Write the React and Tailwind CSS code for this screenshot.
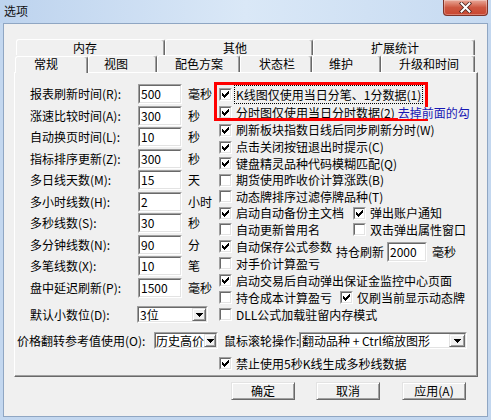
import React from "react";

const sunkenOuter =
  "border border-t-[#a0a0a0] border-l-[#a0a0a0] border-r-white border-b-white";
const sunkenInner =
  "border border-t-[#696969] border-l-[#696969] border-r-[#e3e3e3] border-b-[#e3e3e3] bg-white";
const raised =
  "border border-t-[#e3e3e3] border-l-[#e3e3e3] border-r-[#696969] border-b-[#696969] shadow-[inset_1px_1px_0_#fff,inset_-1px_-1px_0_#a0a0a0] bg-[#f0f0f0]";

const Check = ({ on }) => (
  <span className={"block w-[13px] h-[13px] shrink-0 " + sunkenOuter}>
    <span className={"block w-full h-full " + sunkenInner}>
      {on && (
        <svg width="9" height="9" viewBox="0 0 9 9" className="block" shapeRendering="crispEdges">
          <path
            fill="#000"
            d="M7 1h1v1h-1z M6 2h2v1h-2z M1 3h1v1h-1z M5 3h3v1h-3z M1 4h2v1h-2z M4 4h3v1h-3z M1 5h5v1h-5z M2 6h3v1h-3z M3 7h1v1h-1z"
          />
        </svg>
      )}
    </span>
  </span>
);

const Tri = () => (
  <svg width="7" height="4" viewBox="0 0 7 4" shapeRendering="crispEdges" className="block">
    <path fill="#000" d="M0 0h7v1h-7z M1 1h5v1h-5z M2 2h3v1h-3z M3 3h1v1h-1z" />
  </svg>
);

const Field = ({ w, value }) => (
  <div className={"h-[20px] shrink-0 " + w + " " + sunkenOuter}>
    <div className={"h-full flex items-center pl-[1px] leading-[14px] " + sunkenInner}>{value}</div>
  </div>
);

const Combo = ({ w, text, bw = "w-[14px]", pl = "pl-[1px]" }) => (
  <div className={"h-[17px] shrink-0 " + w + " " + sunkenOuter}>
    <div className={"h-full flex items-center " + sunkenInner}>
      <span className={"flex-1 min-w-0 whitespace-nowrap leading-[13px] " + pl}>{text}</span>
      <span className={"h-full flex items-center justify-center shrink-0 relative z-10 " + bw + " " + raised}>
        <Tri />
      </span>
    </div>
  </div>
);

const CB = ({ on, h, children }) => (
  <div className={"flex items-center " + h}>
    <Check on={on} />
    <span className="ml-[4px] whitespace-nowrap">{children}</span>
  </div>
);

const leftRows = [
  ["报表刷新时间(R):", "500", "毫秒", "h-[22px]"],
  ["涨速比较时间(A):", "300", "秒", "h-[21px]"],
  ["自动换页时间(L):", "10", "秒", "h-[22px]"],
  ["指标排序更新(Z):", "300", "秒", "h-[21px]"],
  ["多日线天数(M):", "15", "天", "h-[22px]"],
  ["多小时线数(H):", "2", "小时", "h-[21px]"],
  ["多秒线数(S):", "30", "秒", "h-[22px]"],
  ["多分钟线数(N):", "90", "分", "h-[21px]"],
  ["多笔线数(X):", "10", "笔", "h-[22px]"],
  ["盘中延迟刷新(P):", "1500", "毫秒", "h-[21px]"],
];

const tabBase =
  "h-full flex items-center bg-[#f0f0f0] border-t border-l border-white border-r border-r-[#696969] rounded-t-[3px] shadow-[inset_-1px_0_0_#a0a0a0] whitespace-nowrap";

export default function App() {
  return (
    <div className="relative w-[491px] h-[420px] overflow-hidden bg-[#c3d7ef] flex flex-col font-['Noto_Sans_CJK_SC','Liberation_Sans',sans-serif] text-[12px] leading-[14px] text-black">
      {/* Title bar */}
      <div className="h-[23px] shrink-0 flex items-start bg-gradient-to-r from-[#bdd3ee] via-[#dae8f7] to-[#c6daf1]">
        <span className="ml-[4px] mt-[4px] text-[12px] leading-[14px] text-[#111]">选项</span>
        <div className="ml-auto mr-[3px] w-[45px] h-[16px] rounded-b-[4px] border border-t-0 border-[#7e3329] bg-gradient-to-b from-[#e8a899] via-[#cd5741] to-[#c9452f] shadow-[inset_0_0_0_1px_rgba(255,255,255,0.3)] flex items-center justify-center">
          <svg width="13" height="11" viewBox="0 0 13 11">
            <path d="M2.5 1.5 L10.5 9.5 M10.5 1.5 L2.5 9.5" stroke="#4a2520" strokeWidth="3.6" strokeLinecap="square" />
            <path d="M2.5 1.5 L10.5 9.5 M10.5 1.5 L2.5 9.5" stroke="#fff" strokeWidth="2" strokeLinecap="square" />
          </svg>
        </div>
      </div>

      {/* Client area */}
      <div className="mx-[3px] h-[394px] shrink-0 border border-[#8fa6c3] bg-[#f0f0f0] flex flex-col">
        <div className="ml-[10px] mt-[15px] w-[464px] flex flex-col">
          {/* Tab row 1 */}
          <div className="h-[16px] pl-[2px] flex">
            <div className={"w-[149px] pl-[56px] " + tabBase}>内存</div>
            <div className={"w-[148px] pl-[57px] " + tabBase}>其他</div>
            <div className={"w-[162px] pl-[57px] " + tabBase}>扩展统计</div>
          </div>
          {/* Tab row 2 */}
          <div className="h-[17px] pl-[1px] flex items-end">
            <div className={"relative z-10 -mb-px h-[20px] w-[73px] pl-[18px] pb-[2px] " + tabBase}>常规</div>
            <div className={"w-[69px] pl-[15px] " + tabBase}>视图</div>
            <div className={"w-[83px] pl-[17px] " + tabBase}>配色方案</div>
            <div className={"w-[72px] pl-[18px] " + tabBase}>状态栏</div>
            <div className={"w-[69px] pl-[16px] " + tabBase}>维护</div>
            <div className={"w-[94px] pl-[17px] " + tabBase}>升级和时间</div>
          </div>

          {/* Panel */}
          <div className="h-[305px] border border-t-white border-l-white border-r-[#696969] border-b-[#696969] shadow-[inset_-1px_-1px_0_#a0a0a0] flex flex-col">
            <div className="pt-[11px] flex">
              {/* Left column */}
              <div className="w-[204px] pl-[15px] flex flex-col shrink-0">
                {leftRows.map(([label, val, unit, h]) => (
                  <div key={label} className={"flex items-start " + h}>
                    <span className="w-[108px] h-[20px] flex items-center whitespace-nowrap">{label}</span>
                    <Field w="w-[44px]" value={val} />
                    <span className="ml-[6px] h-[20px] flex items-center whitespace-nowrap">{unit}</span>
                  </div>
                ))}
                <div className="mt-[7px] h-[17px] flex items-center">
                  <span className="w-[107px] whitespace-nowrap">默认小数位(D):</span>
                  <Combo w="w-[71px]" text="3位" />
                </div>
              </div>

              {/* Right column */}
              <div className="pt-[1px] flex flex-col">
                <CB on h="h-[19px]">
                  <span className="-ml-[2px] px-[1px] border border-dotted border-black">K线图仅使用当日分笔、1分数据(1)</span>
                </CB>
                <div className="h-[17px] flex items-center">
                  <Check on />
                  <span className="ml-[4px] whitespace-nowrap">分时图仅使用当日分时数据(2)</span>
                  <span className="relative z-30 ml-[3px] whitespace-nowrap leading-[12px] bg-[#f0f0f0] text-[#1717b4]">去掉前面的勾</span>
                </div>
                <CB on h="h-[18px]">刷新板块指数日线后同步刷新分时(W)</CB>
                <CB on h="h-[16px]">点击关闭按钮退出时提示(C)</CB>
                <CB on h="h-[17px]">键盘精灵品种代码模糊匹配(Q)</CB>
                <CB h="h-[16px]">期货使用昨收价计算涨跌(B)</CB>
                <CB h="h-[17px]">动态牌排序过滤停牌品种(T)</CB>
                <div className="h-[16px] flex items-center">
                  <Check on />
                  <span className="ml-[4px] w-[117px] whitespace-nowrap">启动自动备份主文档</span>
                  <Check on />
                  <span className="ml-[4px] whitespace-nowrap">弹出账户通知</span>
                </div>
                <div className="h-[17px] flex items-center">
                  <Check />
                  <span className="ml-[4px] w-[117px] whitespace-nowrap">自动更新曾用名</span>
                  <Check />
                  <span className="ml-[4px] whitespace-nowrap">双击弹出属性窗口</span>
                </div>
                <div className="flex">
                  <div className="w-[117px] flex flex-col shrink-0">
                    <CB on h="h-[17px]">自动保存公式参数</CB>
                    <CB h="h-[17px]">对手价计算盈亏</CB>
                  </div>
                  <div className="pt-[4px] flex items-start">
                    <span className="h-[20px] flex items-center whitespace-nowrap">持仓刷新</span>
                    <div className="ml-[3px]">
                      <Field w="w-[40px]" value="2000" />
                    </div>
                    <span className="ml-[5px] h-[20px] flex items-center whitespace-nowrap">毫秒</span>
                  </div>
                </div>
                <CB on h="h-[17px]">启动交易后自动弹出保证金监控中心页面</CB>
                <div className="h-[17px] flex items-center">
                  <Check />
                  <span className="ml-[4px] w-[104px] whitespace-nowrap">持仓成本计算盈亏</span>
                  <Check on />
                  <span className="ml-[4px] whitespace-nowrap">仅刷当前显示动态牌</span>
                </div>
                <CB h="h-[17px]">DLL公式加载驻留内存模式</CB>
              </div>
            </div>

            {/* Price row */}
            <div className="mt-[9px] h-[17px] pl-[2px] flex items-center">
              <span className="w-[137px] whitespace-nowrap">价格翻转参考值使用(O):</span>
              <Combo w="w-[64px]" text="历史高价" bw="w-[12px]" pl="pl-0" />
              <span className="w-[81px] pl-[6px] whitespace-nowrap">鼠标滚轮操作:</span>
              <Combo w="w-[168px]" text="翻动品种 + Ctrl缩放图形" bw="w-[16px]" />
            </div>

            <div className="mt-[6px] pl-[204px]">
              <CB on h="h-[17px]">禁止使用5秒K线生成多秒线数据</CB>
            </div>
          </div>
        </div>

        {/* Buttons */}
        <div className="mt-[5px] pl-[227px] flex">
          <button className={"w-[64px] h-[18px] flex items-center justify-center text-[12px] " + raised}>确定</button>
          <button className={"ml-[21px] w-[64px] h-[18px] flex items-center justify-center text-[12px] " + raised}>取消</button>
          <button className={"ml-[22px] w-[64px] h-[18px] flex items-center justify-center text-[12px] " + raised}>应用(A)</button>
        </div>
      </div>

      {/* Red annotation box */}
      <div className="absolute z-20 left-[214px] top-[82px] w-[214px] h-[39px] border-[3px] border-[#ff0000] pointer-events-none" />
    </div>
  );
}
